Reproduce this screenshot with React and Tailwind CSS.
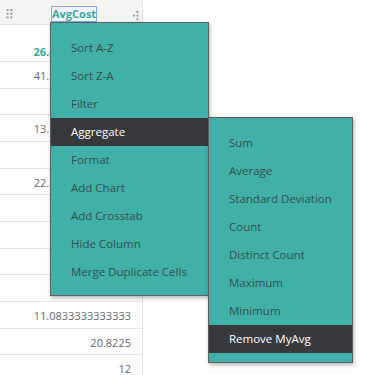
import React from "react";

const rows = [
  "41.3333333333333",
  "",
  "13.7533333333333",
  "",
  "22.2866666666667",
  "",
  "",
  "",
  "",
  "11.0833333333333",
  "20.8225",
  "12",
];

const mainItems = [
  "Sort A-Z",
  "Sort Z-A",
  "Filter",
  "Aggregate",
  "Format",
  "Add Chart",
  "Add Crosstab",
  "Hide Column",
  "Merge Duplicate Cells",
];

const subItems = [
  "Sum",
  "Average",
  "Standard Deviation",
  "Count",
  "Distinct Count",
  "Maximum",
  "Minimum",
  "Remove MyAvg",
];

function Grip() {
  return (
    <svg width="8" height="10" viewBox="0 0 8 10" className="mt-[9px] ml-[6px] shrink-0">
      {[0, 3.7, 7.4].map((y) =>
        [0.5, 4.3].map((x) => (
          <rect key={x + "-" + y} x={x} y={y} width="2" height="2" fill="#9a9a9a" />
        ))
      )}
    </svg>
  );
}

function Kebab() {
  return (
    <svg width="7" height="10" viewBox="0 0 7 10" className="mt-[11px] ml-auto mr-[3px] shrink-0">
      <rect x="4.5" y="0" width="2" height="2" fill="#9a9a9a" />
      <rect x="1" y="3.6" width="2" height="2" fill="#9a9a9a" />
      <rect x="4.5" y="3.6" width="2" height="2" fill="#9a9a9a" />
      <rect x="4.5" y="7.2" width="2" height="2" fill="#9a9a9a" />
    </svg>
  );
}

function MenuItem({ label, active }) {
  return (
    <div
      className={
        "h-[28px] pl-[20px] flex items-center whitespace-nowrap " +
        (active ? "bg-[#38393c] text-white" : "text-[#33504e]")
      }
    >
      {label}
    </div>
  );
}

export default function App() {
  return (
    <div className="relative w-[367px] h-[375px] overflow-hidden bg-white font-['Open_Sans',sans-serif]">
      <div className="w-[143px] h-full border-r border-[#e4e4e4] flex flex-col">
        <div className="h-[25px] shrink-0 bg-[#f4f4f4] border-b border-[#e2e2e2] flex items-start">
          <Grip />
          <span className="ml-[37px] mt-[6px] border border-[#86a9ee] h-[16px] leading-[14px] text-[11px] font-bold text-[#33aaa2]">
            AvgCost
          </span>
          <Kebab />
        </div>
        <div className="h-[37px] shrink-0 border-b border-[#e6e6e6] flex items-end justify-end pr-[11px] pb-[1px] text-[11px] font-bold text-[#36aba3]">
          26.4758333333333
        </div>
        {rows.map((r, i) => (
          <div
            key={i}
            className="h-[26.67px] shrink-0 border-b border-[#e6e6e6] flex items-center justify-end pr-[11px] pt-[3px] text-[11px] text-[#666a70]"
          >
            {r}
          </div>
        ))}
      </div>

      <div className="absolute left-[50px] top-[22px] w-[159px] pt-[11px] pb-[9px] bg-[#40b0a9] border border-[#5b5f5f] shadow-[1px_2px_4px_rgba(0,0,0,0.3)] text-[11.5px] z-10">
        {mainItems.map((m) => (
          <MenuItem key={m} label={m} active={m === "Aggregate"} />
        ))}
      </div>

      <div className="absolute left-[208px] top-[117px] w-[145px] pt-[11px] pb-[9px] bg-[#40b0a9] border border-[#5b5f5f] shadow-[1px_2px_4px_rgba(0,0,0,0.3)] text-[11.5px] z-20">
        {subItems.map((m) => (
          <MenuItem key={m} label={m} active={m === "Remove MyAvg"} />
        ))}
      </div>
    </div>
  );
}
